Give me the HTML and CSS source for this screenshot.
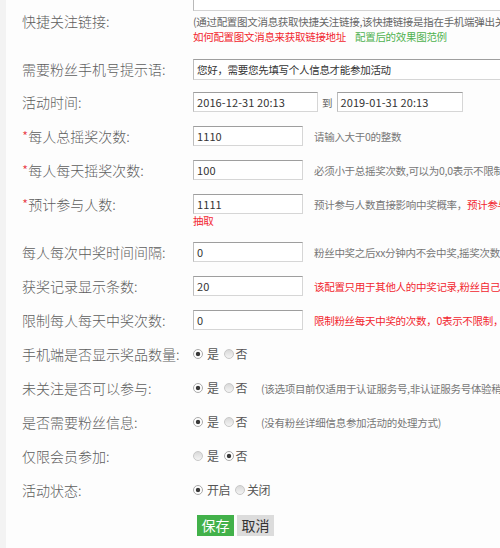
FILE: index.html
```html
<!DOCTYPE html>
<html lang="zh-CN">
<head>
<meta charset="utf-8">
<title>活动设置</title>
<link rel="stylesheet" href="styles.css">
</head>
<body>
<div class="panel">
  <div class="row row-first">
    <div class="label">快捷关注链接:</div>
    <div class="field field-col">
      <div class="textarea-stub"></div>
      <div class="help">(通过配置图文消息获取快捷关注链接,该快捷链接是指在手机端弹出关注提示时点击关注的链接)</div>
      <div class="help"><span class="red">如何配置图文消息来获取链接地址</span><span class="green">配置后的效果图范例</span></div>
    </div>
  </div>

  <div class="row row-short">
    <div class="label">需要粉丝手机号提示语:</div>
    <div class="field"><div class="input input-wide">您好，需要您先填写个人信息才能参加活动</div></div>
  </div>

  <div class="row">
    <div class="label">活动时间:</div>
    <div class="field">
      <div class="input input-date">2016-12-31 20:13</div>
      <span class="to">到</span>
      <div class="input input-date2">2019-01-31 20:13</div>
    </div>
  </div>

  <div class="row">
    <div class="label"><span class="star">*</span>每人总摇奖次数:</div>
    <div class="field"><div class="input">1110</div><span class="hint">请输入大于0的整数</span></div>
  </div>

  <div class="row">
    <div class="label"><span class="star">*</span>每人每天摇奖次数:</div>
    <div class="field"><div class="input">100</div><span class="hint">必须小于总摇奖次数,可以为0,0表示不限制每天的摇奖次数</span></div>
  </div>

  <div class="row row-tall">
    <div class="label"><span class="star">*</span>预计参与人数:</div>
    <div class="field field-col">
      <div class="line"><div class="input">1111</div><span class="hint">预计参与人数直接影响中奖概率，<span class="red">预计参与人数越大中奖概率越低，奖品发放完毕后粉丝将无法继续</span></span></div>
      <div class="red wrapline">抽取</div>
    </div>
  </div>

  <div class="row">
    <div class="label">每人每次中奖时间间隔:</div>
    <div class="field"><div class="input">0</div><span class="hint">粉丝中奖之后xx分钟内不会中奖,摇奖次数照常扣除</span></div>
  </div>

  <div class="row">
    <div class="label">获奖记录显示条数:</div>
    <div class="field"><div class="input">20</div><span class="hint red">该配置只用于其他人的中奖记录,粉丝自己的中奖记录全部显示</span></div>
  </div>

  <div class="row">
    <div class="label">限制每人每天中奖次数:</div>
    <div class="field"><div class="input">0</div><span class="hint red">限制粉丝每天中奖的次数，0表示不限制，默认为0</span></div>
  </div>

  <div class="row">
    <div class="label">手机端是否显示奖品数量:</div>
    <div class="field"><span class="radio on"></span><span class="opt">是</span><span class="radio radio2"></span><span class="opt">否</span></div>
  </div>

  <div class="row">
    <div class="label">未关注是否可以参与:</div>
    <div class="field"><span class="radio on"></span><span class="opt">是</span><span class="radio radio2"></span><span class="opt">否</span><span class="note">(该选项目前仅适用于认证服务号,非认证服务号体验稍差)</span></div>
  </div>

  <div class="row">
    <div class="label">是否需要粉丝信息:</div>
    <div class="field"><span class="radio on"></span><span class="opt">是</span><span class="radio radio2"></span><span class="opt">否</span><span class="note">(没有粉丝详细信息参加活动的处理方式)</span></div>
  </div>

  <div class="row">
    <div class="label">仅限会员参加:</div>
    <div class="field"><span class="radio"></span><span class="opt">是</span><span class="radio radio2 on"></span><span class="opt">否</span></div>
  </div>

  <div class="row">
    <div class="label">活动状态:</div>
    <div class="field"><span class="radio on"></span><span class="opt">开启</span><span class="radio radio2"></span><span class="opt">关闭</span></div>
  </div>

  <div class="row row-buttons">
    <div class="label"></div>
    <div class="field"><span class="btn btn-save">保存</span><span class="btn btn-cancel">取消</span></div>
  </div>
</div>
</body>
</html>
```

FILE: styles.css
```css
html, body {
  margin: 0;
  padding: 0;
}
body {
  background: #f3f3f3;
  overflow: hidden;
  font-family: "Noto Sans CJK SC", "Microsoft YaHei", "Noto Sans", sans-serif;
  color: #555;
}
.panel {
  margin-left: 6px;
  padding-left: 16px;
  background: #fdfdfd;
  height: 548px;
  overflow: hidden;
}
.row {
  display: flex;
  align-items: center;
  height: 34px;
}
.row-first {
  height: 53px;
  align-items: flex-start;
}
.row-first .label {
  padding-top: 11px;
}
.row-short {
  height: 32px;
}
.row-tall {
  height: 48px;
  align-items: flex-start;
  padding-top: 7px;
  box-sizing: border-box;
}
.row-buttons {
  align-items: flex-start;
  padding-top: 8px;
  box-sizing: border-box;
}
.label {
  width: 171px;
  flex: none;
  font-size: 14px;
  line-height: 20px;
  color: #5e5e5e;
  font-weight: 300;
  white-space: nowrap;
}
.star {
  color: #e8303a;
}
.field {
  display: flex;
  align-items: center;
  white-space: nowrap;
  font-size: 10.5px;
}
.field-col {
  flex-direction: column;
  align-items: flex-start;
}
.line {
  display: flex;
  align-items: center;
}
.textarea-stub {
  width: 400px;
  height: 11px;
  box-sizing: border-box;
  border: 1px solid #d3d3d3;
  border-top: none;
  border-left-color: #b9b9b9;
  background: #fff;
}
.help {
  margin-top: 3px;
  font-size: 10.5px;
  letter-spacing: -0.3px;
  line-height: 15px;
  color: #666;
}
.help + .help {
  margin-top: 0;
}
.red {
  color: #f2262f;
}
.green {
  color: #4fb24f;
  margin-left: 9px;
}
.input {
  box-sizing: border-box;
  width: 110px;
  height: 20px;
  border: 1px solid #d6d6d6;
  border-top-color: #9e9e9e;
  border-left-color: #bdbdbd;
  background: #fff;
  padding: 0 3px;
  font-size: 11px;
  letter-spacing: 0.1px;
  line-height: 18px;
  color: #333;
  overflow: hidden;
}
.input-wide {
  width: 400px;
  height: 21px;
  line-height: 19px;
  font-size: 10.5px;
  letter-spacing: -0.3px;
}
.input-date {
  width: 125px;
}
.input-date2 {
  width: 126px;
}
.to {
  font-size: 10.5px;
  color: #666;
  margin: 0 4px 0 4px;
}
.hint {
  margin-left: 11px;
  font-size: 10.5px;
  letter-spacing: -0.3px;
  color: #777;
}
.hint.red {
  color: #f2262f;
}
.wrapline {
  font-size: 10.5px;
  letter-spacing: -0.3px;
  line-height: 14px;
}
.radio {
  display: inline-block;
  box-sizing: border-box;
  width: 10px;
  height: 10px;
  border-radius: 50%;
  border: 1px solid #c8c8c8;
  background: linear-gradient(#d9d9d9, #f4f4f4);
  margin-right: 4px;
  flex: none;
}
.radio.on {
  border-color: #aaa;
  background: radial-gradient(circle, #3a3a3a 0, #3a3a3a 1.8px, #fff 2.6px);
}
.radio2 {
  margin-right: 2px;
}
.opt {
  font-size: 12px;
  letter-spacing: -0.5px;
  line-height: 16px;
  color: #555;
  margin-right: 5px;
}
.note {
  margin-left: 9px;
  font-size: 10.5px;
  letter-spacing: -0.3px;
  color: #777;
}
.btn {
  display: inline-block;
  width: 37px;
  height: 21px;
  line-height: 21px;
  text-align: center;
  font-size: 14px;
}
.btn-save {
  margin-left: 4px;
  background: #42b14a;
  color: #fff;
}
.btn-cancel {
  margin-left: 3px;
  background: #dcdcdc;
  color: #333;
}
```
